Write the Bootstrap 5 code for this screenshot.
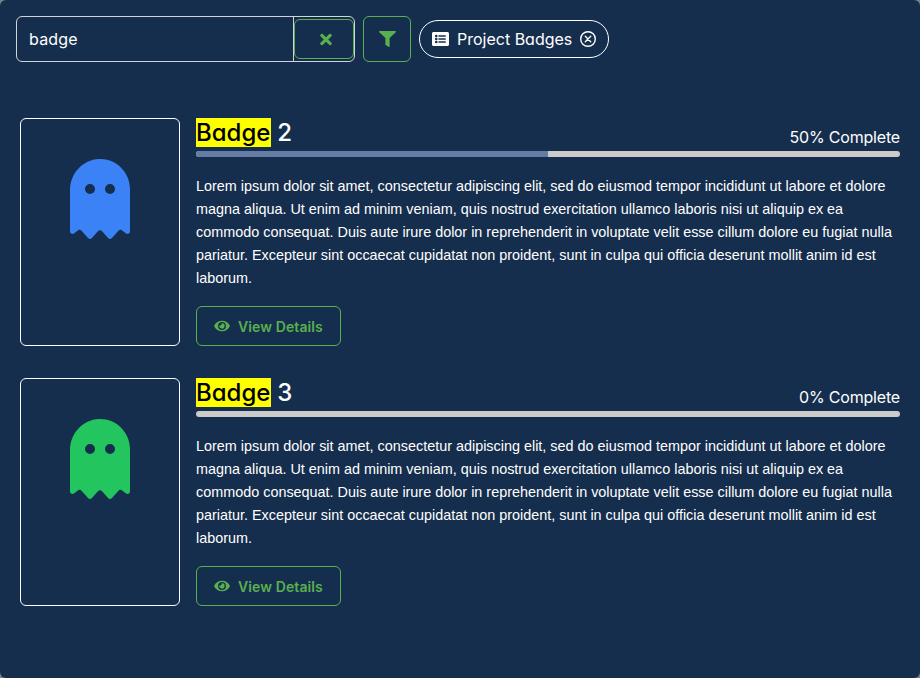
<!DOCTYPE html>
<html lang="en">
<head>
<meta charset="utf-8">
<meta name="viewport" content="width=device-width, initial-scale=1">
<title>Badges</title>
<link href="https://cdn.jsdelivr.net/npm/bootstrap@5.3.0/dist/css/bootstrap.min.css" rel="stylesheet">
<style>
html{background:#7b8085}
body{background:transparent;font-family:Inter,"Liberation Sans",sans-serif;font-feature-settings:"cv11";color:#fff;line-height:1.5}
.panel{background:#162e4d;height:678px;border-radius:6px;padding:16px;overflow:hidden}
.search-box{width:339px;height:46px;border:1px solid #ced4da;border-radius:6px}
.search-box input{width:277px;background:transparent;border:0;border-right:1px solid #ced4da;border-radius:0;color:#fff;padding:0 12px;outline:0;letter-spacing:.2px}
.btn-line{border:1px solid #59b04f;color:#59b04f;background:transparent;border-radius:6px;padding:0;--bs-btn-hover-color:#7cc474}
.btn-clear{width:60px;height:40px}
.btn-clear svg{margin-left:4px;margin-top:1px}
.btn-filter{width:48px;height:46px}
.btn-filter svg{margin-left:1px}
.chip{border:1px solid #fff;border-radius:19px;width:190px;height:38px;padding:0 12px;gap:8px}
.chip-text{letter-spacing:0;width:115px}
.results{padding:56px 4px 0;gap:32px}
.badge-row{height:228px;gap:16px}
.thumb{width:160px;border:1px solid #fff;border-radius:6px;padding-top:40px}
.title{font-size:24px;line-height:28.8px;font-weight:500;padding-top:1px;height:29px}
.title mark{background:#ff0;color:#000;padding:0 .5px 0 0}
.done{line-height:24px;padding-top:7px;height:29px;letter-spacing:-.18px}
.meter{height:6px;border-radius:4px;background:#cbcbcb;margin-top:4px}
.meter .progress-bar{background:#657da5}
.desc{font-family:"Liberation Sans",Arial,sans-serif;font-size:14.4px;line-height:23px;margin:18px 0 16px}
.btn-view{width:145px;height:40px;font-size:14px;font-weight:600;gap:8px}
.btn-view span{padding-top:1px;letter-spacing:.1px}
svg{fill:currentColor;flex:none}
.fit{display:inline-block;white-space:nowrap}
</style>
</head>
<body>
<main class="panel">
<div class="d-flex align-items-start gap-2">
 <div class="search-box d-flex align-items-center">
  <input class="h-100" type="text" value="badge" aria-label="Search">
  <button class="btn btn-line btn-clear d-flex align-items-center justify-content-center" aria-label="Clear"><svg width="12" height="17" viewBox="0 0 352 512"><path d="M242.72 256l100.07-100.07c12.28-12.28 12.28-32.19 0-44.48l-22.24-22.24c-12.28-12.28-32.19-12.28-44.48 0L176 189.28 75.93 89.21c-12.28-12.28-32.19-12.28-44.48 0L9.21 111.45c-12.28 12.28-12.28 32.19 0 44.48L109.28 256 9.21 356.07c-12.28 12.28-12.28 32.19 0 44.48l22.24 22.24c12.28 12.28 32.2 12.28 44.48 0L176 322.72l100.07 100.07c12.28 12.28 32.2 12.28 44.48 0l22.24-22.24c12.28-12.28 12.28-32.19 0-44.48L242.72 256z"/></svg></button>
 </div>
 <button class="btn btn-line btn-filter d-flex align-items-center justify-content-center" aria-label="Filter"><svg width="17" height="16" viewBox="0 0 512 512" preserveAspectRatio="none"><path d="M487.976 0H24.028C2.71 0-8.047 25.866 7.058 40.971L192 225.941V432c0 7.831 3.821 15.17 10.237 19.662l80 55.98C298.02 518.69 320 507.493 320 487.98V225.941l184.947-184.97C520.021 25.896 509.338 0 487.976 0z"/></svg></button>
 <div class="chip d-flex align-items-center mt-1"><svg width="17" height="16" viewBox="0 0 512 512" preserveAspectRatio="none"><path fill-rule="evenodd" d="M464 480H48c-26.500 0-48-21.500-48-48V80c0-26.500 21.500-48 48-48h416c26.500 0 48 21.500 48 48v352c0 26.500-21.500 48-48 48zM128 120a40 40 0 1 0 0 80 40 40 0 0 0 0-80zm0 96a40 40 0 1 0 0 80 40 40 0 0 0 0-80zm0 96a40 40 0 1 0 0 80 40 40 0 0 0 0-80zM204 136h200q12 0 12 12v24q0 12-12 12H204q-12 0-12-12v-24q0-12 12-12zm0 96h200q12 0 12 12v24q0 12-12 12H204q-12 0-12-12v-24q0-12 12-12zm0 96h200q12 0 12 12v24q0 12-12 12H204q-12 0-12-12v-24q0-12 12-12z"/></svg><span class="fit chip-text">Project Badges</span><svg width="16" height="16" viewBox="0 0 16 16"><g fill="none" stroke="currentColor" stroke-width="1.400" stroke-linecap="round"><circle cx="8" cy="8" r="7.300"/><path d="M5.300 5.300l5.400 5.400M10.700 5.300l-5.400 5.400"/></g></svg></div>
</div>
<div class="results d-flex flex-column">
 <article class="badge-row d-flex">
  <div class="thumb flex-shrink-0 d-flex justify-content-center align-items-start" style="color:#3b82f6"><svg width="60" height="80" viewBox="0 0 384 512"><path d="M186.100.09C81.010 3.240 0 94.920 0 200.050v263.920c0 14.260 17.230 21.390 27.310 11.310l24.920-18.530c6.660-4.950 16-3.990 21.510 2.210l42.950 48.350c6.250 6.250 16.380 6.250 22.630 0l40.720-45.850c6.370-7.170 17.560-7.170 23.920 0l40.720 45.850c6.250 6.250 16.380 6.250 22.630 0l42.950-48.350c5.510-6.200 14.850-7.170 21.510-2.210l24.920 18.530c10.080 10.080 27.310 2.940 27.310-11.310V192C384 84 294.830-3.170 186.100.09zM128 224a32 32 0 1 1 0-64 32 32 0 0 1 0 64zm128 0a32 32 0 1 1 0-64 32 32 0 0 1 0 64z"/></svg></div>
  <div class="flex-grow-1">
   <div class="d-flex justify-content-between align-items-start"><h2 class="title m-0"><mark>Badge</mark> 2</h2><span class="fit done">50% Complete</span></div>
   <div class="progress meter"><div class="progress-bar" style="width:50%"></div></div>
   <p class="desc">Lorem ipsum dolor sit amet, consectetur adipiscing elit, sed do eiusmod tempor incididunt ut labore et dolore magna aliqua. Ut enim ad minim veniam, quis nostrud exercitation ullamco laboris nisi ut aliquip ex ea commodo consequat. Duis aute irure dolor in reprehenderit in voluptate velit esse cillum dolore eu fugiat nulla pariatur. Excepteur sint occaecat cupidatat non proident, sunt in culpa qui officia deserunt mollit anim id est laborum.</p>
   <button class="btn btn-line btn-view d-flex align-items-center justify-content-center"><svg width="16" height="14" viewBox="0 0 576 512"><path d="M572.520 241.400C518.290 135.590 410.930 64 288 64S57.680 135.640 3.480 241.410a32.350 32.350 0 0 0 0 29.190C57.710 376.410 165.070 448 288 448s230.320-71.640 284.520-177.410a32.350 32.350 0 0 0 0-29.190zM288 400a144 144 0 1 1 144-144 143.930 143.930 0 0 1-144 144zm0-240a95.310 95.310 0 0 0-25.310 3.790 47.850 47.850 0 0 1-66.900 66.900A95.780 95.780 0 1 0 288 160z"/></svg><span>View Details</span></button>
  </div>
 </article>
 <article class="badge-row d-flex">
  <div class="thumb flex-shrink-0 d-flex justify-content-center align-items-start" style="color:#22c55e"><svg width="60" height="80" viewBox="0 0 384 512"><path d="M186.100.09C81.010 3.240 0 94.920 0 200.050v263.920c0 14.260 17.230 21.390 27.310 11.310l24.920-18.530c6.660-4.950 16-3.990 21.510 2.210l42.950 48.350c6.250 6.250 16.380 6.250 22.630 0l40.720-45.850c6.370-7.170 17.560-7.170 23.920 0l40.720 45.850c6.250 6.250 16.380 6.250 22.630 0l42.950-48.350c5.510-6.200 14.850-7.170 21.510-2.210l24.920 18.530c10.080 10.080 27.310 2.940 27.310-11.310V192C384 84 294.830-3.170 186.100.09zM128 224a32 32 0 1 1 0-64 32 32 0 0 1 0 64zm128 0a32 32 0 1 1 0-64 32 32 0 0 1 0 64z"/></svg></div>
  <div class="flex-grow-1">
   <div class="d-flex justify-content-between align-items-start"><h2 class="title m-0"><mark>Badge</mark> 3</h2><span class="fit done">0% Complete</span></div>
   <div class="progress meter"><div class="progress-bar" style="width:0%"></div></div>
   <p class="desc">Lorem ipsum dolor sit amet, consectetur adipiscing elit, sed do eiusmod tempor incididunt ut labore et dolore magna aliqua. Ut enim ad minim veniam, quis nostrud exercitation ullamco laboris nisi ut aliquip ex ea commodo consequat. Duis aute irure dolor in reprehenderit in voluptate velit esse cillum dolore eu fugiat nulla pariatur. Excepteur sint occaecat cupidatat non proident, sunt in culpa qui officia deserunt mollit anim id est laborum.</p>
   <button class="btn btn-line btn-view d-flex align-items-center justify-content-center"><svg width="16" height="14" viewBox="0 0 576 512"><path d="M572.520 241.400C518.290 135.590 410.930 64 288 64S57.680 135.640 3.480 241.410a32.350 32.350 0 0 0 0 29.190C57.710 376.410 165.070 448 288 448s230.320-71.640 284.520-177.410a32.350 32.350 0 0 0 0-29.190zM288 400a144 144 0 1 1 144-144 143.930 143.930 0 0 1-144 144zm0-240a95.310 95.310 0 0 0-25.310 3.790 47.850 47.850 0 0 1-66.900 66.900A95.780 95.780 0 1 0 288 160z"/></svg><span>View Details</span></button>
  </div>
 </article>
</div>
</main>
<script src="https://cdn.jsdelivr.net/npm/bootstrap@5.3.0/dist/js/bootstrap.bundle.min.js"></script>
</body>
</html>
